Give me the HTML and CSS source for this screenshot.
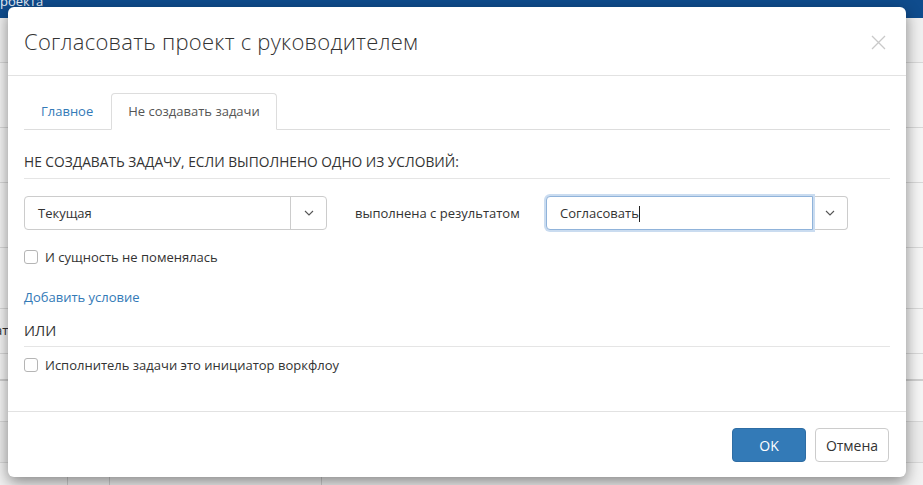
FILE: index.html
```html
<!DOCTYPE html>
<html lang="ru">
<head>
<meta charset="utf-8">
<title>Согласовать проект с руководителем</title>
<link rel="stylesheet" href="styles.css">
</head>
<body>
<div class="page">
  <div class="topbar"><span class="topbar-text">роекта</span></div>
  <div class="bg-rows">
    <div class="bg-row r1"></div>
    <div class="bg-row r2"></div>
    <div class="bg-row r3"></div>
    <div class="bg-row r4"></div>
    <div class="bg-row r5"></div>
    <div class="bg-row r6"><span class="bg-text">ат</span></div>
    <div class="bg-row r7"></div>
    <div class="bg-row r8"></div>
    <div class="bg-row r9"></div>
    <div class="bg-foot">
      <div class="bg-cell c1"></div>
      <div class="bg-cell c2"></div>
      <div class="bg-cell c3"></div>
      <div class="bg-cell c4"></div>
    </div>
  </div>
</div>

<div class="modal">
  <div class="modal-header">
    <h4 class="modal-title">Согласовать проект с руководителем</h4>
    <button class="close" type="button" aria-label="Закрыть">
      <svg width="15" height="15" viewBox="0 0 15 15"><path d="M1 1 L14 14 M14 1 L1 14" stroke="#c9c9c9" stroke-width="1.3" fill="none"/></svg>
    </button>
  </div>
  <div class="modal-body">
    <ul class="tabs">
      <li class="tab"><a class="tab-link">Главное</a></li>
      <li class="tab active"><a class="tab-link">Не создавать задачи</a></li>
    </ul>
    <div class="section-title">НЕ СОЗДАВАТЬ ЗАДАЧУ, ЕСЛИ ВЫПОЛНЕНО ОДНО ИЗ УСЛОВИЙ:</div>
    <div class="cond-row">
      <div class="select">
        <span class="select-value">Текущая</span>
        <span class="select-btn">
          <svg width="10" height="6" viewBox="0 0 10 6"><path d="M1 1 L5 5 L9 1" stroke="#555" stroke-width="1.1" fill="none"/></svg>
        </span>
      </div>
      <span class="cond-label">выполнена с результатом</span>
      <div class="combo">
        <div class="combo-input">Согласовать<span class="caret"></span></div>
        <span class="combo-btn">
          <svg width="10" height="6" viewBox="0 0 10 6"><path d="M1 1 L5 5 L9 1" stroke="#555" stroke-width="1.1" fill="none"/></svg>
        </span>
      </div>
    </div>
    <label class="check check-1"><span class="box"></span>И сущность не поменялась</label>
    <a class="add-link">Добавить условие</a>
    <div class="or-title">ИЛИ</div>
    <label class="check check-2"><span class="box"></span>Исполнитель задачи это инициатор воркфлоу</label>
  </div>
  <div class="modal-footer">
    <button class="btn btn-primary" type="button">OK</button>
    <button class="btn btn-default" type="button">Отмена</button>
  </div>
</div>
</body>
</html>
```
FILE: styles.css
```css
* { box-sizing: border-box; }
html, body { margin: 0; padding: 0; }
body {
  width: 923px;
  height: 485px;
  overflow: hidden;
  font-family: "Open Sans", "Noto Sans", sans-serif;
  font-size: 13px;
  color: #333;
  background: #f4f4f4;
  position: relative;
}

/* background page */
.page { width: 923px; height: 485px; overflow: hidden; }
.topbar {
  height: 18px;
  background: #0f4c8d;
  overflow: hidden;
}
.topbar-text {
  display: block;
  color: #e6eef7;
  font-size: 13px;
  line-height: 10px;
  margin-top: -4px;
}
.bg-rows { display: flex; flex-direction: column; }
.bg-row { border-bottom: 1px solid #d8d8d8; background: #f5f5f5; }
.r1 { height: 45px; background: #f0f0f0; }
.r2 { height: 65px; }
.r3 { height: 55px; }
.r4 { height: 65px; }
.r5 { height: 61px; }
.r6 { height: 45px; position: relative; }
.r7 { height: 27px; border-bottom: 2px solid #cfcfcf; }
.r8 { height: 41px; }
.r9 { height: 41px; background: #ececec; }
.bg-text {
  position: absolute;
  left: -5px;
  top: 12px;
  font-size: 13px;
  color: #333;
}
.bg-foot { display: flex; height: 22px; background: #f2f2f2; }
.bg-cell { border-right: 1px solid #cfcfcf; height: 100%; }
.c1 { width: 68px; }
.c2 { width: 42px; }
.c3 { width: 212px; }
.c4 { flex: 1; border-right: 0; }

/* modal */
.modal {
  position: absolute;
  left: 8px;
  top: 7px;
  width: 898px;
  height: 470px;
  background: #fff;
  border-radius: 6px;
  box-shadow: 0 5px 15px rgba(0, 0, 0, 0.45);
  display: flex;
  flex-direction: column;
}
.modal-header {
  height: 69px;
  padding: 0 20px 0 16px;
  display: flex;
  align-items: center;
  justify-content: space-between;
  border-bottom: 1px solid #e2e2e2;
  flex-shrink: 0;
}
.modal-title {
  margin: 0;
  font-size: 22px;
  font-weight: 300;
  color: #333;
  line-height: 30px;
  letter-spacing: 0.25px;
}
.close {
  background: none;
  border: 0;
  padding: 0;
  width: 15px;
  height: 15px;
  display: flex;
  margin-top: 3px;
}

.modal-body {
  height: 335px;
  padding: 17px 16px 0;
  flex-shrink: 0;
}
.tabs {
  list-style: none;
  margin: 0;
  padding: 0;
  display: flex;
  border-bottom: 1px solid #ddd;
  height: 37px;
}
.tab { margin-right: 1px; }
.tab-link {
  display: block;
  height: 37px;
  line-height: 35px;
  padding: 0 16px;
  color: #337ab7;
  border: 1px solid transparent;
  border-radius: 4px 4px 0 0;
  cursor: pointer;
}
.tab.active .tab-link {
  color: #555;
  background: #fff;
  border-color: #ddd #ddd transparent;
}

.section-title {
  height: 49px;
  padding-top: 22px;
  line-height: 20px;
  font-size: 13.75px;
  border-bottom: 1px solid #e5e5e5;
  color: #333;
}

.cond-row {
  margin-top: 17px;
  height: 34px;
  display: flex;
  align-items: center;
}
.select {
  width: 303px;
  height: 34px;
  border: 1px solid #ccc;
  border-radius: 4px;
  display: flex;
  align-items: center;
}
.select-value { flex: 1; padding-left: 13px; }
.select-btn {
  width: 36px;
  height: 100%;
  border-left: 1px solid #ccc;
  display: flex;
  align-items: center;
  justify-content: center;
}
.cond-label {
  width: 219px;
  padding-left: 28px;
  color: #333;
}
.combo {
  width: 302px;
  height: 34px;
  display: flex;
  position: relative;
}
.combo-input {
  width: 267px;
  height: 34px;
  border: 1px solid #90b3da;
  border-radius: 4px 0 0 4px;
  box-shadow: 0 0 0 2px #cadcf0;
  padding-left: 13px;
  line-height: 32px;
  position: relative;
  z-index: 1;
  background: #fff;
}
.caret {
  display: inline-block;
  width: 1px;
  height: 16px;
  background: #222;
  vertical-align: middle;
  margin-top: -2px;
}
.combo-btn {
  width: 35px;
  height: 34px;
  border: 1px solid #ccc;
  border-left: 0;
  border-radius: 0 4px 4px 0;
  display: flex;
  align-items: center;
  justify-content: center;
}

.check {
  display: flex;
  align-items: center;
  height: 16px;
  line-height: 16px;
}
.box {
  width: 14px;
  height: 14px;
  border: 1px solid #b5b5b5;
  border-radius: 3px;
  margin-right: 7px;
  background: #fff;
}
.check-1 { margin-top: 19px; }
.add-link {
  display: block;
  margin-top: 22px;
  line-height: 20px;
  color: #337ab7;
  cursor: pointer;
}
.or-title {
  margin-top: 14px;
  line-height: 20px;
  padding-bottom: 5px;
  font-size: 14.5px;
  border-bottom: 1px solid #e5e5e5;
}
.check-2 { margin-top: 10px; }

.modal-footer {
  height: 66px;
  border-top: 1px solid #e2e2e2;
  padding: 16px 17px 0;
  display: flex;
  justify-content: flex-end;
  gap: 9px;
}
.btn {
  width: 74px;
  height: 34px;
  border-radius: 4px;
  font-family: "Open Sans", "Noto Sans", sans-serif;
  font-size: 14px;
  cursor: pointer;
}
.btn-primary {
  background: #337ab7;
  border: 1px solid #2e6da4;
  color: #fff;
}
.btn-default {
  background: #fff;
  border: 1px solid #ccc;
  color: #333;
}
```
